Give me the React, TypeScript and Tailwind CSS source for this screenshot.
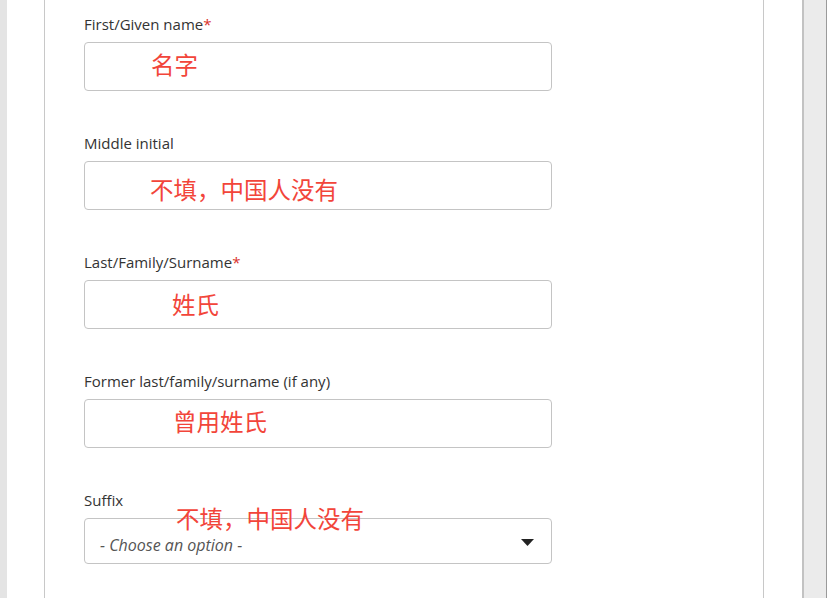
const fields = [
  { label: "First/Given name", required: true, note: "名字", pad: "pl-[66px]", shift: "mb-[5px]" },
  { label: "Middle initial", required: false, note: "不填，中国人没有", pad: "pl-[65px]", shift: "mt-[7px]" },
  { label: "Last/Family/Surname", required: true, note: "姓氏", pad: "pl-[87px]", shift: "mb-[2px]" },
  { label: "Former last/family/surname (if any)", required: false, note: "曾用姓氏", pad: "pl-[88px]", shift: "mb-[5px]" },
];

const noteFont = "font-['Noto_Sans_CJK_SC','Noto_Sans',sans-serif]";

function Label({ text, required }: { text: string; required?: boolean }) {
  return (
    <div className="h-[18px] mb-[9px] text-[15px] leading-[18px] text-[#333]">
      {text}
      {required && <span className="text-[#d9302c]">*</span>}
    </div>
  );
}

export default function App() {
  return (
    <div className="flex h-[598px] w-[830px] overflow-hidden bg-white font-['Open_Sans',sans-serif]">
      <div className="w-[7px] shrink-0 bg-[#e4e4e4]" />
      <div className="w-[37px] shrink-0 bg-white" />
      <div className="w-[720px] shrink-0 border-x border-[#c8c8c8] bg-white pl-[39px] pt-[15px]">
        <div className="flex w-[468px] flex-col gap-[43px]">
          {fields.map((f) => (
            <div key={f.label}>
              <Label text={f.label} required={f.required} />
              <div
                className={`flex h-[49px] items-center rounded-[4px] border border-[#c4c4c4] ${f.pad}`}
              >
                <span
                  className={`${noteFont} ${f.shift} text-[23.5px] leading-[26px] text-[#f2453a]`}
                >
                  {f.note}
                </span>
              </div>
            </div>
          ))}
          <div>
            <Label text="Suffix" />
            <div className="relative flex h-[46px] items-center justify-between rounded-[4px] border border-[#c4c4c4] pl-[15px] pr-[17px]">
              <span className="mt-[8px] text-[16px] italic text-[#555]">- Choose an option -</span>
              <svg width="13" height="7" viewBox="0 0 13 7" className="mt-[3px]">
                <polygon points="0,0 13,0 6.5,7" fill="#222" />
              </svg>
              <span
                className={`${noteFont} absolute left-[91px] top-[-14px] text-[23.5px] leading-[26px] text-[#f2453a]`}
              >
                不填，中国人没有
              </span>
            </div>
          </div>
        </div>
      </div>
      <div className="w-[38px] shrink-0 bg-white" />
      <div className="w-[25px] shrink-0 border-l-2 border-r border-l-[#c2c2c2] border-r-[#9a9a9a] bg-[#ebebeb]" />
      <div className="flex-1 bg-white" />
    </div>
  );
}
